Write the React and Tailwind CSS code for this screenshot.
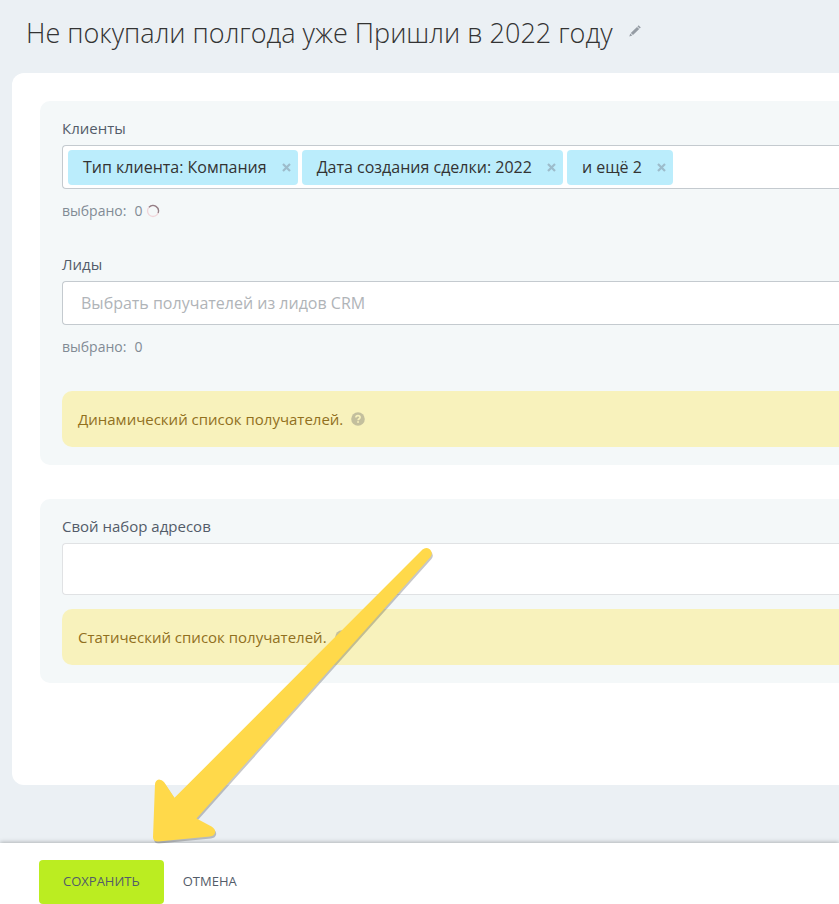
import React from "react";

function CloseIcon() {
  return (
    <svg width="9" height="9" viewBox="0 0 9 9" aria-hidden="true">
      <path d="M1 1L8 8M8 1L1 8" stroke="#9dbccb" strokeWidth="2.2" fill="none" />
    </svg>
  );
}

function Chip({ text }) {
  return (
    <span className="flex h-[35px] shrink-0 items-center gap-[15px] rounded-sm bg-[#bbedfc] pl-[15px] pr-[7px] text-base text-[#333]">
      <span className="whitespace-nowrap">{text}</span>
      <button type="button" aria-label={"Удалить: " + text} className="flex">
        <CloseIcon />
      </button>
    </span>
  );
}

function Selected({ loading }) {
  return (
    <div className="mt-3 flex h-5 items-center text-sm text-[#828b95]">
      <span>выбрано:</span>
      <span className="ml-2">0</span>
      {loading && (
        <svg className="ml-1" width="14" height="14" viewBox="0 0 14 14" fill="none" aria-hidden="true">
          <circle cx="7" cy="7" r="5.5" stroke="#f0d5da" strokeWidth="1.3" />
          <path d="M3 3.200A5.500 5.500 0 0 1 12.100 9" stroke="#927f86" strokeWidth="1.3" />
        </svg>
      )}
    </div>
  );
}

function Note({ text }) {
  return (
    <div className="flex h-14 items-center gap-2 rounded-l-[10px] bg-[#f8f2bc] pl-4 text-[15px] text-[#91701e]">
      <span>{text}</span>
      <button type="button" aria-label="Справка" className="flex">
        <svg width="14" height="14" viewBox="0 0 14 14" fill="none" aria-hidden="true">
          <circle cx="7" cy="7" r="6.8" fill="#c3bf9d" />
          <path d="M4.900 5.600C4.900 4.300 5.800 3.600 7 3.600s2.100.7 2.100 1.800c0 1.300-2 1.400-2 2.900" stroke="#f8f2bc" strokeWidth="1.6" />
          <rect x="6.200" y="9.200" width="1.700" height="1.600" fill="#f8f2bc" />
        </svg>
      </button>
    </div>
  );
}

const ARROW =
  "M422.500 549.500Q426 546.500 429.800 549.300Q433.500 553 430.500 557L196.500 818.500L211.500 826.500Q216 829.500 215 833Q214 836 210 836.500L158 841.500Q153 841.500 153 837L155 784Q155.500 780 159 779.500Q162 779.500 164 782L174.500 797.800Z";

export default function App() {
  return (
    <div className="relative flex min-h-screen flex-col overflow-hidden bg-[#ebf0f4] font-['Open_Sans','Noto_Sans',sans-serif]">
      <header className="flex h-[73px] items-center gap-4 pb-[6px] pl-[26px]">
        <h1 className="whitespace-nowrap text-[27px] font-light text-[#333]">Не покупали полгода уже Пришли в 2022 году</h1>
        <button type="button" aria-label="Изменить название" className="mb-[6px] flex">
          <svg width="12" height="12" viewBox="0 0 12 12" fill="#959ca4" aria-hidden="true">
            <path d="M9.600 .3L11.800 2.500L10.700 3.600L8.500 1.400ZM8 1.900L10.200 4.100L4 10L1.800 7.900ZM1.300 8.600L3.300 10.500L.3 11.600Z" />
          </svg>
        </button>
      </header>

      <main className="ml-3 flex flex-col gap-[34px] rounded-l-xl bg-white pb-[102px] pl-7 pt-7">
        <section className="rounded-l-[10px] bg-[#f4f8f9] py-[18px] pl-[22px]">
          <label htmlFor="clients" className="block text-[15px] leading-[18px] text-[#535c69]">Клиенты</label>
          <div className="mt-2 flex h-11 items-center gap-1 rounded-l border border-r-0 border-[#c4cacf] bg-white pl-[5px]">
            <Chip text="Тип клиента: Компания" />
            <Chip text="Дата создания сделки: 2022" />
            <Chip text="и ещё 2" />
            <input id="clients" type="text" className="h-full min-w-0 flex-1 outline-none" />
          </div>
          <Selected loading />

          <label htmlFor="leads" className="mt-[34px] block text-[15px] leading-[18px] text-[#535c69]">Лиды</label>
          <input
            id="leads"
            type="text"
            placeholder="Выбрать получателей из лидов CRM"
            className="mt-2 block h-11 w-full rounded-l border border-r-0 border-[#c4cacf] bg-white pl-[18px] text-base outline-none placeholder:text-[#b0b4b8]"
          />
          <Selected />
          <div className="mt-[34px]">
            <Note text="Динамический список получателей." />
          </div>
        </section>

        <section className="rounded-l-[10px] bg-[#f4f8f9] py-[18px] pl-[22px]">
          <label htmlFor="addresses" className="block text-[15px] leading-[18px] text-[#535c69]">Свой набор адресов</label>
          <textarea
            id="addresses"
            className="mt-2 block h-[52px] w-full resize-none rounded-l border border-r-0 border-[#e0e2e4] bg-white outline-none"
          />
          <div className="mt-[14px]">
            <Note text="Статический список получателей." />
          </div>
        </section>
      </main>

      <footer className="mt-auto flex gap-[19px] bg-white pl-[39px] pt-[17px] text-[13px] font-medium text-[#535c69] shadow-[0_-1px_4px_rgba(0,0,0,0.25)]">
        <button type="button" className="h-11 rounded bg-[#bbed21] px-6">СОХРАНИТЬ</button>
        <button type="button" className="h-11">ОТМЕНА</button>
      </footer>

      <svg className="pointer-events-none absolute left-[150px] top-[545px]" width="290" height="305" viewBox="150 545 290 305" aria-hidden="true">
        <path transform="translate(1 2)" fill="#000" fillOpacity=".22" d={ARROW} />
        <path fill="#ffd94a" d={ARROW} />
      </svg>
    </div>
  );
}
